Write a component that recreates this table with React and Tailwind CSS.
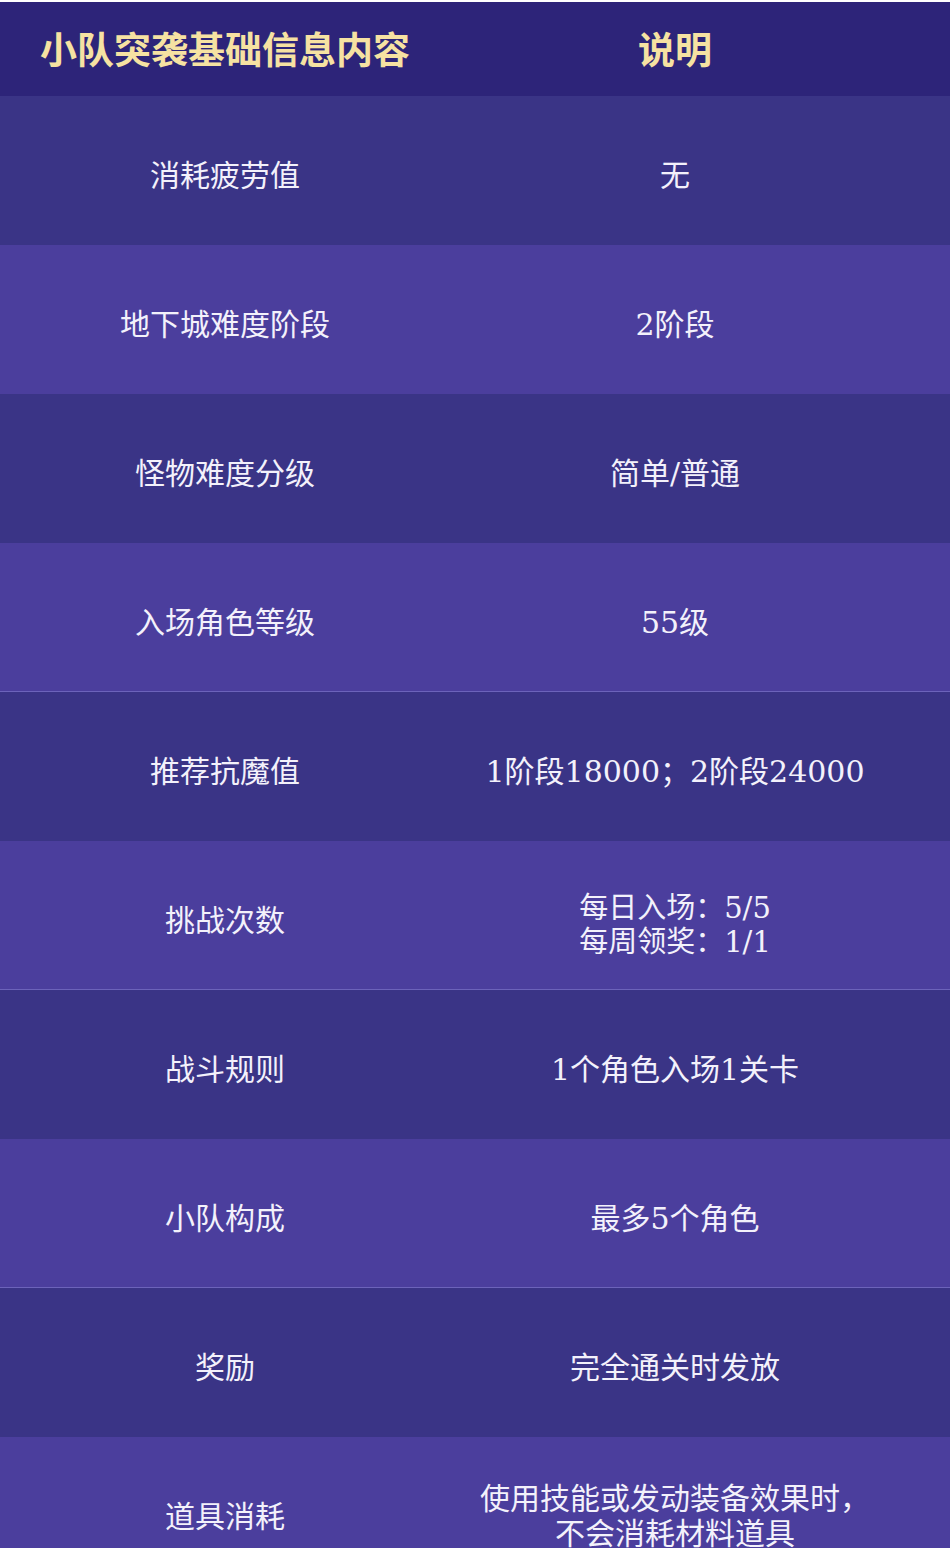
import React from "react";

const rows = [
  { k: "消耗疲劳值", v: ["无"] },
  { k: "地下城难度阶段", v: ["2阶段"] },
  { k: "怪物难度分级", v: ["简单/普通"] },
  { k: "入场角色等级", v: ["55级"], line: true },
  { k: "推荐抗魔值", v: ["1阶段18000；2阶段24000"] },
  { k: "挑战次数", v: ["每日入场：5/5", "每周领奖：1/1"], small: true, line: true },
  { k: "战斗规则", v: ["1个角色入场1关卡"] },
  { k: "小队构成", v: ["最多5个角色"], line: true },
  { k: "奖励", v: ["完全通关时发放"] },
  { k: "道具消耗", v: ["使用技能或发动装备效果时，", "不会消耗材料道具"], tight: true },
];

const App = () => {
  return (
    <div className="w-[950px] h-[1548px] overflow-hidden bg-white pt-[2px] font-['DejaVu_Serif','Noto_Sans_CJK_SC',serif]">
      {/* header */}
      <div className="grid grid-cols-[450px_1fr] h-[94px] bg-[#2d2479] text-[#f6e2a2] font-bold text-[37px] pt-[6px]">
        <div className="flex items-center justify-center">小队突袭基础信息内容</div>
        <div className="flex items-center justify-center pr-[50px]">说明</div>
      </div>

      {rows.map((r, i) => (
        <div
          key={r.k}
          className={
            "grid grid-cols-[450px_1fr] h-[149px] text-[#f3f1fb] " +
            (i % 2 === 0 ? "bg-[#3a3486] " : "bg-[#4b3e9d] ") +
            (r.line ? "border-b border-[#6c63ba]" : "")
          }
        >
          <div className="flex items-center justify-center text-[30px] pt-[10px]">{r.k}</div>
          <div
            className={
              "flex flex-col items-center justify-center pr-[50px] " +
              (r.small
                ? "text-[29px] leading-[34px] pt-[20px]"
                : r.tight
                ? "text-[30px] leading-[35px] pt-[8px]"
                : "text-[30px] pt-[10px]")
            }
          >
            {r.v.map((t) => (
              <div key={t}>{t}</div>
            ))}
          </div>
        </div>
      ))}
    </div>
  );
};

export default App;
